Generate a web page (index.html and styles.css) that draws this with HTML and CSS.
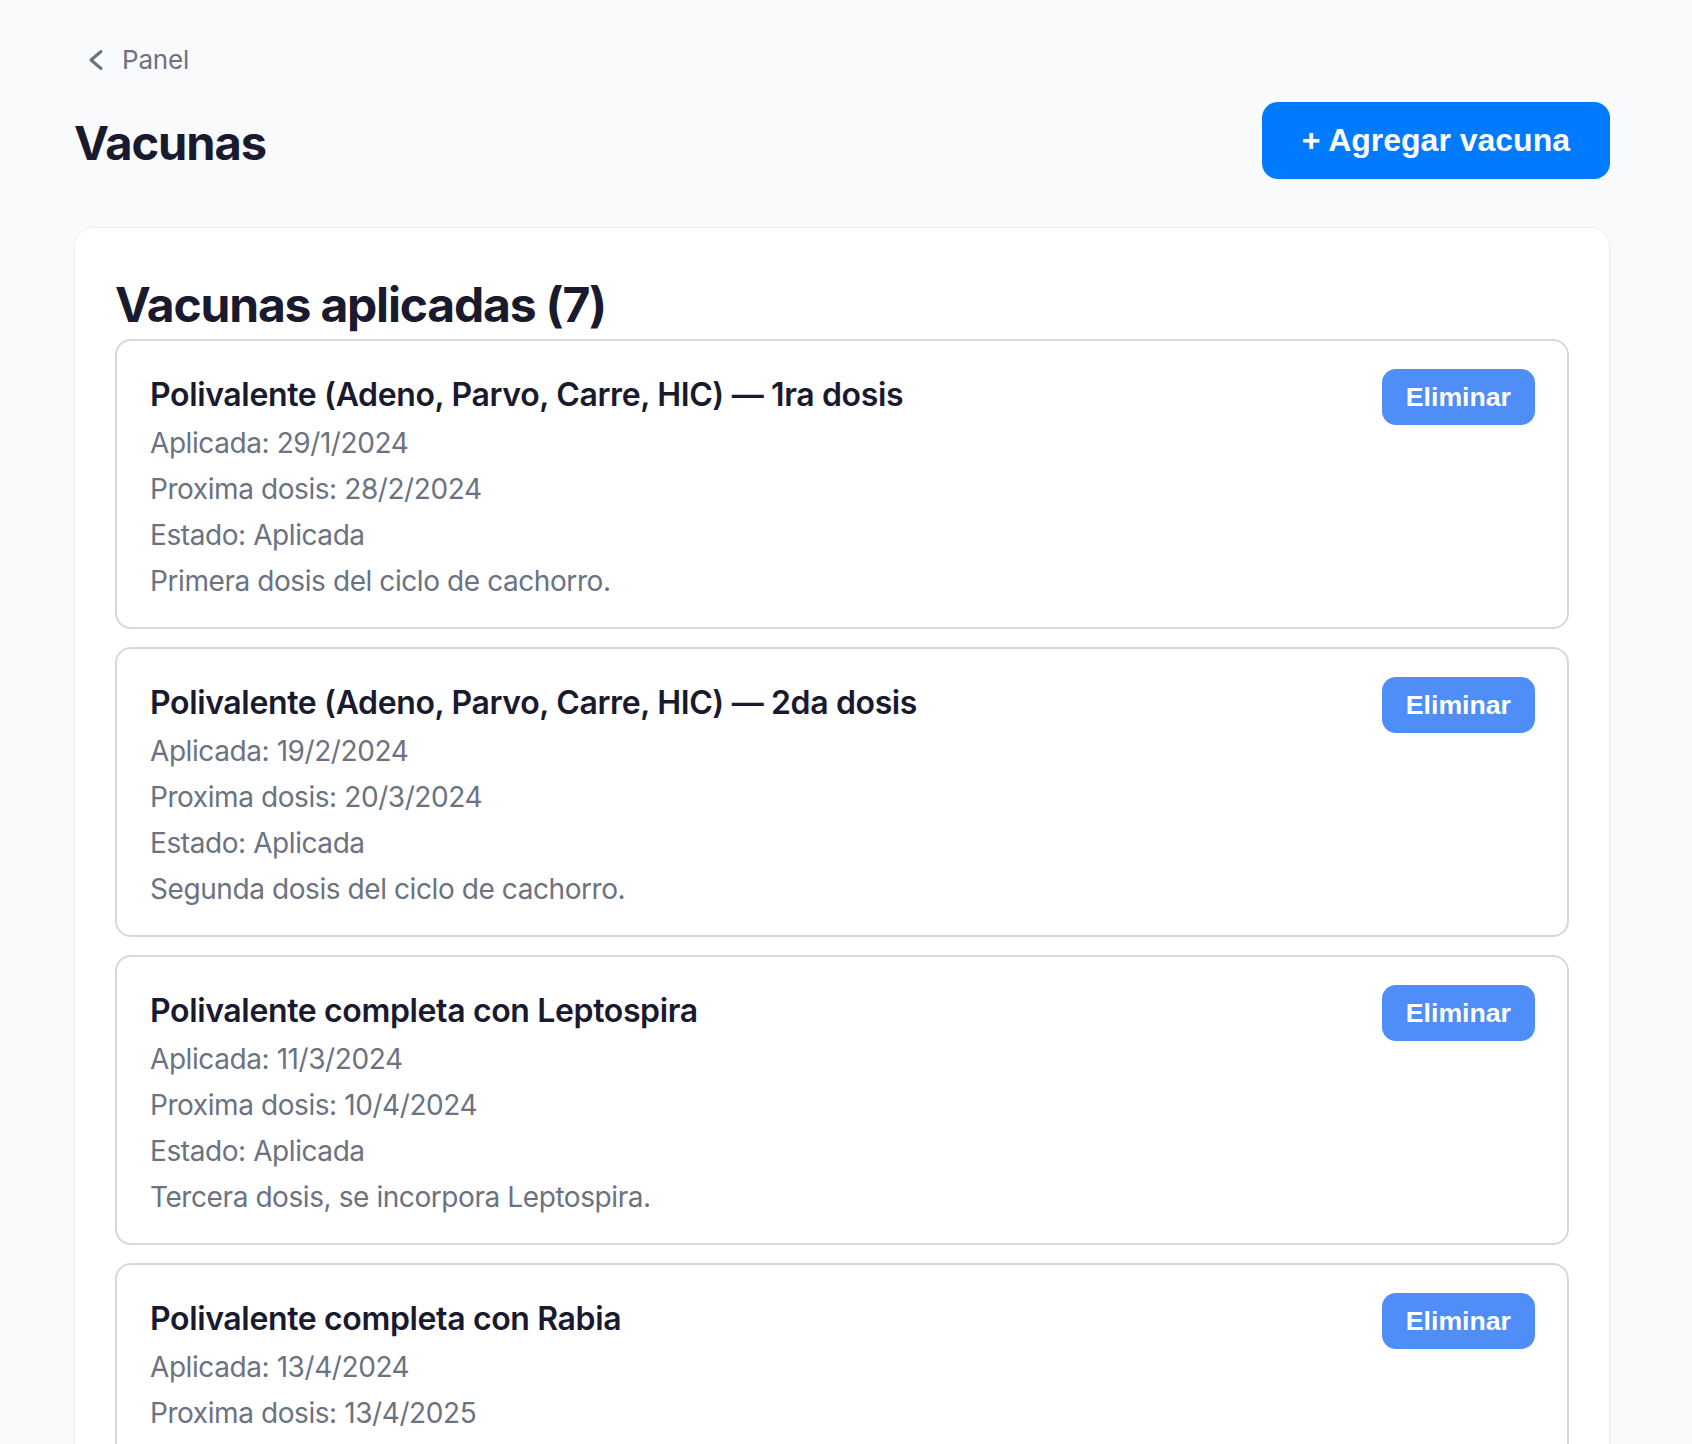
FILE: index.html
```html
<!DOCTYPE html>
<html lang="es">
<head>
<meta charset="utf-8">
<title>Vacunas</title>
<link rel="stylesheet" href="styles.css">
</head>
<body>
<div class="page">
  <a class="back" href="#">
    <svg class="back-icon" width="16" height="24" viewBox="0 0 16 24" aria-hidden="true"><path d="M13 3.5 L3 12 L13 20.5" fill="none" stroke="currentColor" stroke-width="3" stroke-linecap="round" stroke-linejoin="round"/></svg>
    <span>Panel</span>
  </a>
  <div class="header">
    <h1 class="title">Vacunas</h1>
    <button class="btn-add">+ Agregar vacuna</button>
  </div>
  <section class="card">
    <h2 class="card-title">Vacunas aplicadas (7)</h2>
    <div class="list">
      <div class="entry">
        <div class="entry-body">
          <div class="entry-name">Polivalente (Adeno, Parvo, Carre, HIC) — 1ra dosis</div>
          <div class="entry-line">Aplicada: 29/1/2024</div>
          <div class="entry-line">Proxima dosis: 28/2/2024</div>
          <div class="entry-line">Estado: Aplicada</div>
          <div class="entry-line">Primera dosis del ciclo de cachorro.</div>
        </div>
        <button class="btn-del">Eliminar</button>
      </div>
      <div class="entry">
        <div class="entry-body">
          <div class="entry-name">Polivalente (Adeno, Parvo, Carre, HIC) — 2da dosis</div>
          <div class="entry-line">Aplicada: 19/2/2024</div>
          <div class="entry-line">Proxima dosis: 20/3/2024</div>
          <div class="entry-line">Estado: Aplicada</div>
          <div class="entry-line">Segunda dosis del ciclo de cachorro.</div>
        </div>
        <button class="btn-del">Eliminar</button>
      </div>
      <div class="entry">
        <div class="entry-body">
          <div class="entry-name">Polivalente completa con Leptospira</div>
          <div class="entry-line">Aplicada: 11/3/2024</div>
          <div class="entry-line">Proxima dosis: 10/4/2024</div>
          <div class="entry-line">Estado: Aplicada</div>
          <div class="entry-line">Tercera dosis, se incorpora Leptospira.</div>
        </div>
        <button class="btn-del">Eliminar</button>
      </div>
      <div class="entry">
        <div class="entry-body">
          <div class="entry-name">Polivalente completa con Rabia</div>
          <div class="entry-line">Aplicada: 13/4/2024</div>
          <div class="entry-line">Proxima dosis: 13/4/2025</div>
          <div class="entry-line">Estado: Aplicada</div>
          <div class="entry-line">Cuarta dosis, incluye Rabia.</div>
        </div>
        <button class="btn-del">Eliminar</button>
      </div>
    </div>
  </section>
</div>
</body>
</html>
```
FILE: styles.css
```css
* { box-sizing: border-box; }
html, body { margin: 0; }
body {
  background: #f8fafc;
  font-family: Inter, "Noto Sans", sans-serif;
  color: #1a1a2e;
}
.page {
  padding: 42px 82px 0 74px;
}
.back {
  display: flex;
  align-items: center;
  gap: 18px;
  margin-left: 14px;
  height: 36px;
  color: #6b7280;
  text-decoration: none;
  font-size: 26px;
  line-height: 36px;
  letter-spacing: -0.2px;
}
.back-icon { display: block; flex: none; }
.header {
  display: flex;
  align-items: center;
  justify-content: space-between;
  margin-top: 24px;
}
.title {
  margin: 5px 0 0;
  font-size: 47px;
  font-weight: 700;
  line-height: 1.2;
  letter-spacing: -1.05px;
  color: #1a1a2e;
}
.btn-add {
  border: none;
  background: #007aff;
  color: #fff;
  font-family: "Liberation Sans", Arial, sans-serif;
  font-weight: 700;
  font-size: 32px;
  line-height: 36.8px;
  padding: 20px 40px;
  border-radius: 16px;
}
.card {
  margin-top: 48px;
  background: #fff;
  border: 1px solid #eef0f3;
  border-radius: 20px;
  box-shadow: 0 1px 3px rgba(15, 23, 42, 0.04);
  padding: 48px 40px 40px;
}
.card-title {
  margin: 0 0 6px;
  font-size: 48px;
  font-weight: 700;
  line-height: 1.2;
  letter-spacing: -1.2px;
  color: #1a1a2e;
}
.list {
  display: flex;
  flex-direction: column;
  gap: 18px;
}
.entry {
  display: flex;
  justify-content: space-between;
  align-items: flex-start;
  border: 2px solid #d6d8de;
  border-radius: 16px;
  padding: 28px 32px 23px 33px;
}
.entry-body {
  padding-top: 2px;
}
.entry-name {
  font-size: 32px;
  font-weight: 600;
  line-height: 48px;
  margin-bottom: 1px;
  letter-spacing: -0.36px;
  color: #1a1a2e;
}
.entry-line {
  font-size: 28px;
  line-height: 46px;
  letter-spacing: -0.42px;
  color: #6b7280;
}
.btn-del {
  flex: none;
  border: none;
  background: #4f8ef7;
  color: #fff;
  font-family: "Liberation Sans", Arial, sans-serif;
  font-weight: 700;
  font-size: 26.67px;
  line-height: 31px;
  padding: 12.5px 24px;
  border-radius: 14px;
}
```
